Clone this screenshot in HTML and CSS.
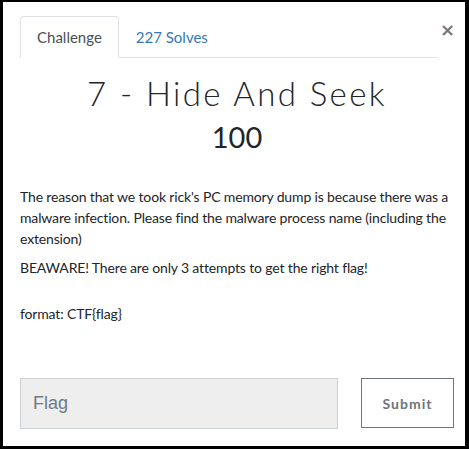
FILE: index.html
```html
<!DOCTYPE html>
<html>
<head>
<meta charset="utf-8">
<link rel="stylesheet" href="styles.css">
</head>
<body>
<div class="modal">
  <div class="header">
    <ul class="tabs">
      <li class="tab active">Challenge</li>
      <li class="tab link">227 Solves</li>
    </ul>
    <button class="close" aria-label="Close">&times;</button>
  </div>
  <h2 class="title">7 - Hide And Seek</h2>
  <h3 class="value">100</h3>
  <div class="desc">
    <p class="p1">The reason that we took rick's PC memory dump is because there was a malware infection. Please find the malware process name (including the extension)</p>
    <p class="p2">BEAWARE! There are only 3 attempts to get the right flag!</p>
    <p class="p3">format: CTF{flag}</p>
  </div>
  <div class="submit-row">
    <input class="flag" type="text" placeholder="Flag">
    <button class="submit">Submit</button>
  </div>
</div>
</body>
</html>
```
FILE: styles.css
```css
html, body {
  margin: 0;
  padding: 0;
  background: #000;
}
.modal {
  box-sizing: border-box;
  width: 469px;
  height: 449px;
  background: #fff;
  border-style: solid;
  border-color: #000;
  border-width: 2px 4px 3px 3px;
  padding: 14px 11px 0 17px;
  font-family: Lato, "Noto Sans", sans-serif;
  color: #212529;
}
.header {
  display: flex;
  align-items: flex-start;
}
.tabs {
  flex: 1;
  display: flex;
  margin: 0;
  padding: 0;
  list-style: none;
  border-bottom: 1px solid #dee2e6;
}
.tab {
  font-size: 15px;
  line-height: 21px;
  padding: 10px 16px 9px;
  border: 1px solid transparent;
  border-radius: 4px 4px 0 0;
  margin-bottom: -1px;
}
.tab.active {
  border-color: #dee2e6 #dee2e6 #fff;
  color: #495057;
}
.tab.link {
  color: #337ab7;
}
.close {
  width: 14px;
  margin: 4px 0 0 2px;
  padding: 0;
  border: 0;
  background: none;
  font-family: "DejaVu Sans", sans-serif;
  font-size: 18px;
  font-weight: bold;
  line-height: 20px;
  color: #777;
}
.title {
  margin: 15px 0 0;
  text-align: center;
  font-weight: 300;
  font-size: 33px;
  line-height: 40px;
  letter-spacing: 2.4px;
}
.value {
  margin: 6px 0 0;
  text-align: center;
  font-weight: 400;
  font-size: 29px;
  line-height: 36px;
}
.desc {
  margin-top: 31px;
  font-size: 14px;
  line-height: 21px;
  letter-spacing: -0.15px;
}
.desc p {
  margin: 0;
}
.desc .p1 { margin-bottom: 8px; }
.desc .p2 { margin-bottom: 25px; }
.submit-row {
  display: flex;
  margin-top: 54px;
  gap: 23px;
}
.flag {
  box-sizing: border-box;
  width: 318px;
  height: 51px;
  margin: 0;
  padding: 0 12px;
  background: #eee;
  border: 1px solid #ccd1d6;
  font-family: "Liberation Sans", Arial, sans-serif;
  font-size: 18px;
  color: #495057;
}
.flag::placeholder {
  color: #6c7a89;
}
.submit {
  box-sizing: border-box;
  width: 93px;
  height: 50px;
  margin: 0;
  background: #fff;
  border: 1px solid #6c757d;
  font-family: Lato, sans-serif;
  font-weight: 700;
  font-size: 14px;
  letter-spacing: 1px;
  color: #6c757d;
}
```
